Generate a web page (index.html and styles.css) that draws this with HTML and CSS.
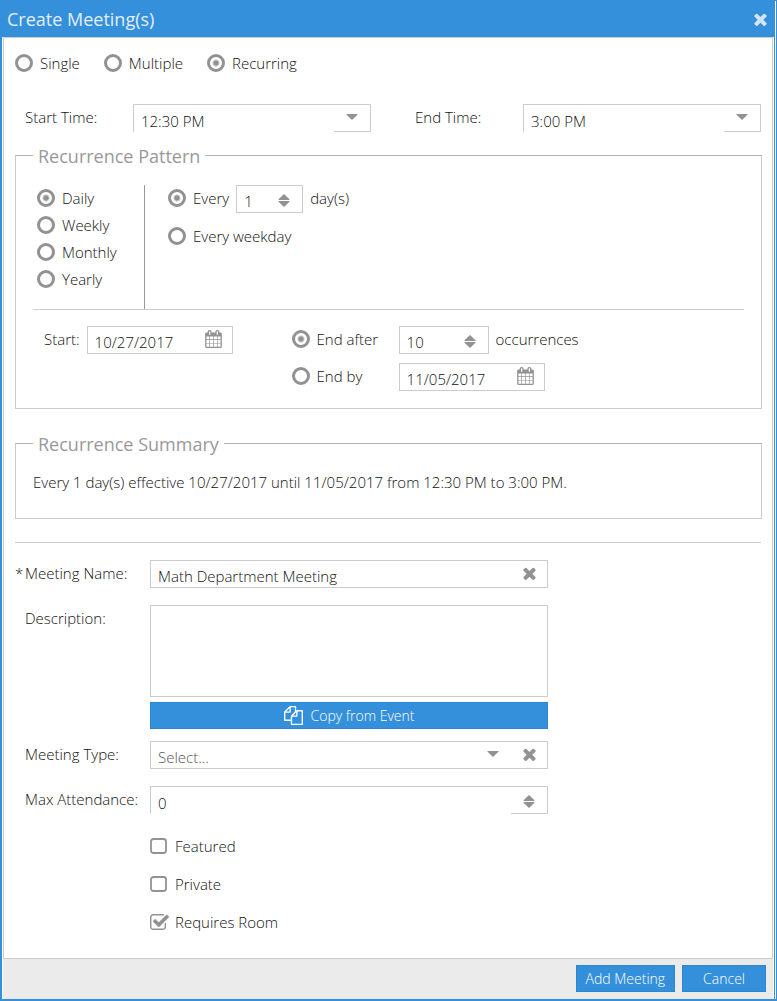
FILE: index.html
```html
<!DOCTYPE html>
<html lang="en">
<head>
  <meta charset="UTF-8">
  <meta name="viewport" content="width=device-width, initial-scale=1.0">
  <title>Create Meeting(s)</title>
  <link rel="stylesheet" href="styles.css">
</head>
<body>

  <svg class="sprite" aria-hidden="true">
    <symbol id="icon-times" viewBox="302 302 1188 1252">
      <path d="M1490 1322q0 40-28 68l-136 136q-28 28-68 28t-68-28l-294-294-294 294q-28 28-68 28t-68-28l-136-136q-28-28-28-68t28-68l294-294-294-294q-28-28-28-68t28-68l136-136q28-28 68-28t68 28l294 294 294-294q28-28 68-28t68 28l136 136q28 28 28 68t-28 68l-294 294 294 294q28 28 28 68z"/>
    </symbol>
    <symbol id="icon-calendar" viewBox="64 0 1664 1792">
      <path d="M192 1664h288v-288h-288v288zm352 0h320v-288h-320v288zm-352-352h288v-320h-288v320zm352 0h320v-320h-320v320zm-352-384h288v-288h-288v288zm736 736h320v-288h-320v288zm-384-736h320v-288h-320v288zm768 736h288v-288h-288v288zm-384-352h320v-320h-320v320zm-352-864v-288q0-13-9.5-22.5t-22.5-9.5h-64q-13 0-22.5 9.5t-9.5 22.5v288q0 13 9.5 22.5t22.5 9.5h64q13 0 22.5-9.5t9.5-22.5zm736 864h288v-320h-288v320zm-384-384h320v-288h-320v288zm384 0h288v-288h-288v288zm32-480v-288q0-13-9.5-22.5t-22.5-9.5h-64q-13 0-22.5 9.5t-9.5 22.5v288q0 13 9.5 22.5t22.5 9.5h64q13 0 22.5-9.5t9.5-22.5zm384-64v1280q0 52-38 90t-90 38h-1408q-52 0-90-38t-38-90v-1280q0-52 38-90t90-38h128v-96q0-66 47-113t113-47h64q66 0 113 47t47 113v96h384v-96q0-66 47-113t113-47h64q66 0 113 47t47 113v96h128q52 0 90 38t38 90z"/>
    </symbol>
    <symbol id="icon-copy" viewBox="0 0 1792 1792">
      <path d="M1696 384q40 0 68 28t28 68v1216q0 40-28 68t-68 28h-960q-40 0-68-28t-28-68v-288h-544q-40 0-68-28t-28-68v-672q0-40 20-88t48-76l408-408q28-28 76-48t88-20h416q40 0 68 28t28 68v328q68-40 128-40h416zm-544 213l-299 299h299v-299zm-640-384l-299 299h299v-299zm196 647l316-316v-416h-384v416q0 40-28 68t-68 28h-416v640h512v-256q0-40 20-88t48-76zm956 804v-1152h-384v416q0 40-28 68t-68 28h-416v640h896z"/>
    </symbol>
    <symbol id="icon-up" viewBox="0 0 12 6">
      <path d="M6 0l5.500 5.200q.4.800-.5.800H1q-.9 0-.5-.8z"/>
    </symbol>
    <symbol id="icon-down" viewBox="0 0 12 6">
      <path d="M6 6L.5.800Q.1 0 1 0h10q.9 0 .5.800z"/>
    </symbol>
  </svg>

  <form class="dialog">
    <div class="dialog-inner">
      <header class="dialog-header">
        <h1 class="dialog-title">Create Meeting(s)</h1>
        <button type="button" class="icon-button close" aria-label="Close"><svg class="icon-x"><use href="#icon-times"/></svg></button>
      </header>

      <main class="dialog-body">
        <div class="mode-row">
          <label class="choice"><input type="radio" name="mode">Single</label>
          <label class="choice"><input type="radio" name="mode">Multiple</label>
          <label class="choice"><input type="radio" name="mode" checked>Recurring</label>
        </div>

        <div class="time-row">
          <div class="time-field">
            <label for="start-time">Start Time:</label>
            <select id="start-time" class="time-select">
              <option>12:30 PM</option>
            </select>
          </div>
          <div class="time-field">
            <label for="end-time">End Time:</label>
            <select id="end-time" class="time-select">
              <option>3:00 PM</option>
            </select>
          </div>
        </div>

        <fieldset class="group">
          <legend>Recurrence Pattern</legend>
          <div class="pattern">
            <div class="frequency">
              <label class="choice"><input type="radio" name="frequency" checked>Daily</label>
              <label class="choice"><input type="radio" name="frequency">Weekly</label>
              <label class="choice"><input type="radio" name="frequency">Monthly</label>
              <label class="choice"><input type="radio" name="frequency">Yearly</label>
            </div>
            <div class="interval">
              <div class="interval-row">
                <label class="choice"><input type="radio" name="interval" checked>Every</label>
                <div class="field field-days">
                  <input type="number" id="days" value="1">
                  <div class="stepper">
                    <button type="button" aria-label="More days"><svg><use href="#icon-up"/></svg></button>
                    <button type="button" aria-label="Fewer days"><svg><use href="#icon-down"/></svg></button>
                  </div>
                </div>
                <label for="days">day(s)</label>
              </div>
              <div class="interval-row">
                <label class="choice"><input type="radio" name="interval">Every weekday</label>
              </div>
            </div>
          </div>

          <div class="range">
            <div class="range-start">
              <label for="start-date">Start:</label>
              <div class="field field-date">
                <input type="text" id="start-date" value="10/27/2017">
                <button type="button" class="icon-button calendar" aria-label="Pick start date"><svg><use href="#icon-calendar"/></svg></button>
              </div>
            </div>
            <div class="range-end">
              <label class="choice"><input type="radio" name="end" checked>End after</label>
              <div class="range-value">
                <div class="field field-count">
                  <input type="number" id="occurrences" value="10">
                  <div class="stepper">
                    <button type="button" aria-label="More occurrences"><svg><use href="#icon-up"/></svg></button>
                    <button type="button" aria-label="Fewer occurrences"><svg><use href="#icon-down"/></svg></button>
                  </div>
                </div>
                <label for="occurrences">occurrences</label>
              </div>
              <label class="choice"><input type="radio" name="end">End by</label>
              <div class="field field-date">
                <input type="text" aria-label="End date" value="11/05/2017">
                <button type="button" class="icon-button calendar" aria-label="Pick end date"><svg><use href="#icon-calendar"/></svg></button>
              </div>
            </div>
          </div>
        </fieldset>

        <fieldset class="group summary">
          <legend>Recurrence Summary</legend>
          <p>Every 1 day(s) effective 10/27/2017 until 11/05/2017 from 12:30 PM to 3:00 PM.</p>
        </fieldset>

        <div class="details">
          <label class="required" for="name">Meeting Name:</label>
          <div class="field">
            <input type="text" id="name" value="Math Department Meeting">
            <button type="button" class="icon-button clear" aria-label="Clear name"><svg class="icon-x"><use href="#icon-times"/></svg></button>
          </div>

          <label for="description">Description:</label>
          <div class="description">
            <textarea id="description"></textarea>
            <button type="button" class="button"><svg class="icon-copy"><use href="#icon-copy"/></svg>Copy from Event</button>
          </div>

          <label for="type">Meeting Type:</label>
          <div class="field">
            <select id="type" class="type-select">
              <option>Select...</option>
            </select>
            <button type="button" class="icon-button clear" aria-label="Clear type"><svg class="icon-x"><use href="#icon-times"/></svg></button>
          </div>

          <label for="attendance">Max Attendance:</label>
          <div class="field field-open">
            <input type="number" id="attendance" value="0">
            <div class="stepper">
              <button type="button" aria-label="Increase"><svg><use href="#icon-up"/></svg></button>
              <button type="button" aria-label="Decrease"><svg><use href="#icon-down"/></svg></button>
            </div>
          </div>

          <div class="options">
            <label class="choice"><input type="checkbox">Featured</label>
            <label class="choice"><input type="checkbox">Private</label>
            <label class="choice"><input type="checkbox" checked>Requires Room</label>
          </div>
        </div>
      </main>

      <footer class="dialog-footer">
        <button type="submit" class="button">Add Meeting</button>
        <button type="button" class="button button-cancel">Cancel</button>
      </footer>
    </div>
  </form>

</body>
</html>
```

FILE: styles.css
```css
:root {
  --blue: #3590dc;
  --line: #ccc;
  --icon: #929292;
  --text: #111;
  --on-blue: #e4eef8;
  --caret: url("data:image/svg+xml,%3Csvg xmlns='http://www.w3.org/2000/svg' viewBox='0 0 12 6'%3E%3Cpath d='M6 6L.5.8Q.1 0 1 0h10q.9 0 .5.8z' fill='%23929292'/%3E%3C/svg%3E");
}

*, *::before, *::after {
  box-sizing: border-box;
}

body {
  margin: 0;
  background: #fff;
  color: var(--text);
  font: 300 15px/20px "Open Sans", sans-serif;
}

button, input, select, textarea {
  margin: 0;
  padding: 0;
  border: 0;
  border-radius: 0;
  background: none;
  color: inherit;
  font: inherit;
  appearance: none;
}

button {
  cursor: pointer;
}

svg {
  display: block;
  fill: currentColor;
}

.sprite {
  display: none;
}

/* dialog frame */
.dialog {
  display: flex;
  min-height: 100vh;
  padding-right: 1px;
  border: solid var(--blue);
  border-width: 1px 1px 2px 2px;
}

.dialog-inner {
  flex: 1;
  display: flex;
  flex-direction: column;
  min-width: 0;
  border-right: 1px solid var(--blue);
}

.dialog-header {
  display: flex;
  align-items: center;
  justify-content: space-between;
  height: 36px;
  padding: 0 7px 0 5px;
  background: var(--blue);
  color: var(--on-blue);
}

.dialog-title {
  margin: 0;
  font-size: 18px;
  font-weight: 400;
}

.dialog-body {
  flex: 1;
  margin: 0 1px;
  padding: 15px 10px 24px 11px;
  border: 1px solid var(--line);
}

.dialog-footer {
  display: flex;
  justify-content: flex-end;
  gap: 7px;
  margin: 0 1px;
  padding: 6px 7px 7px;
  background: #ebebeb;
}

/* buttons and icons */
.button {
  display: flex;
  align-items: center;
  justify-content: center;
  gap: 8px;
  height: 27px;
  padding: 0 9px;
  border: 1px solid #2f86d0;
  background: var(--blue);
  color: #fff;
  font-size: 14px;
}

.button-cancel {
  padding: 0 20px;
}

.icon-button {
  display: flex;
  align-items: center;
  justify-content: center;
  color: var(--icon);
}

.close {
  color: #d3e6f7;
}

.icon-x {
  width: 13px;
  height: 13px;
}

.icon-copy {
  width: 19px;
  height: 19px;
}

/* radios and tick boxes */
.choice {
  display: flex;
  align-items: center;
  gap: 7px;
  white-space: nowrap;
}

.choice input {
  flex: none;
}

.choice input[type="radio"] {
  width: 18px;
  height: 18px;
  border: 3px solid var(--icon);
  border-radius: 50%;
}

.choice input[type="radio"]:checked {
  background: radial-gradient(circle, var(--icon) 2px, transparent 4px);
}

.choice input[type="checkbox"] {
  width: 19px;
  height: 16px;
  background: no-repeat url("data:image/svg+xml,%3Csvg xmlns='http://www.w3.org/2000/svg' width='19' height='16'%3E%3Crect x='1' y='1' width='15' height='14' rx='2.500' fill='none' stroke='%23929292' stroke-width='1.800'/%3E%3C/svg%3E");
}

.choice input[type="checkbox"]:checked {
  background-image: url("data:image/svg+xml,%3Csvg xmlns='http://www.w3.org/2000/svg' width='19' height='16' viewBox='64 128 1664 1408' preserveAspectRatio='none'%3E%3Cpath fill='%23929292' d='M1472 930v318q0 119-84.500 203.500t-203.500 84.500h-832q-119 0-203.500-84.500t-84.500-203.500v-832q0-119 84.500-203.500t203.500-84.500h832q63 0 117 25 15 7 18 23 3 17-9 29l-49 49q-10 10-23 10-3 0-9-2-23-6-45-6h-832q-66 0-113 47t-47 113v832q0 66 47 113t113 47h832q66 0 113-47t47-113v-254q0-13 9-22l64-64q10-10 23-10 6 0 12 3 20 8 20 29zm231-489l-814 814q-24 24-57 24t-57-24l-430-430q-24-24-24-57t24-57l110-110q24-24 57-24t57 24l263 263 647-647q24-24 57-24t57 24l110 110q24 24 24 57t-24 57z'/%3E%3C/svg%3E");
}

/* text fields */
.field {
  display: flex;
  height: 28px;
  border: 1px solid var(--line);
}

.field > input,
.field > select {
  flex: 1;
  width: 0;
  min-width: 0;
  padding: 4px 7px 0;
}

input[type="number"]::-webkit-inner-spin-button {
  display: none;
}

.field-days {
  width: 67px;
}

.field-count {
  width: 90px;
}

.field-date {
  width: 146px;
}

.stepper {
  display: flex;
  flex-direction: column;
  justify-content: center;
  align-items: center;
  gap: 1px;
  width: 36px;
  padding-top: 3px;
  color: var(--icon);
}

.stepper svg {
  width: 12px;
  height: 6px;
}

.calendar {
  width: 37px;
  padding-bottom: 2px;
}

.calendar svg {
  width: 17px;
  height: 18px;
}

.clear {
  width: 36px;
  padding-bottom: 1px;
}

/* the lower edge is only drawn under the trigger */
.field-open {
  border-bottom: 0;
}

.field-open .stepper {
  border-bottom: 1px solid var(--line);
}

.time-select {
  width: 100%;
  height: 28px;
  padding: 5px 36px 0 7px;
  border: 1px solid var(--line);
  border-bottom: 0;
  background:
    linear-gradient(var(--line), var(--line)) right bottom / 36px 1px no-repeat,
    var(--caret) right 12px top 9px / 12px 6px no-repeat;
}

.field > .type-select {
  color: #555;
  background: var(--caret) right 12px top 9px / 12px 6px no-repeat;
}

/* top rows */
.mode-row {
  display: flex;
  gap: 24px;
  height: 20px;
}

.time-row {
  display: flex;
  gap: 44px;
  margin: 31px 1px 0 10px;
}

.time-field {
  flex: 1;
  display: grid;
  grid-template-columns: 108px 1fr;
  align-items: center;
}

.time-field label {
  padding-bottom: 2px;
}

/* recurrence groups */
.group {
  min-width: 0;
  margin: 11px 0 0;
  padding: 18px 17px 17px;
  border: 1px solid var(--line);
  border-top-color: #b5b5b5;
}

.group legend {
  padding: 2px 5px 0;
  color: #999;
  font-size: 18px;
  font-weight: 400;
  line-height: 22px;
}

.group label {
  padding-bottom: 2px;
}

.pattern {
  display: flex;
  border-bottom: 1px solid var(--line);
}

.frequency {
  width: 112px;
  padding: 0 0 16px 4px;
  border-right: 1px solid #999;
}

.frequency .choice {
  height: 27px;
}

.interval {
  display: flex;
  flex-direction: column;
  gap: 10px;
  padding-left: 23px;
}

.interval-row {
  display: flex;
  align-items: center;
  gap: 7px;
  height: 28px;
}

.range {
  display: flex;
  align-items: flex-start;
  gap: 59px;
  padding: 16px 0 0 11px;
}

.range-start {
  display: flex;
  align-items: center;
  gap: 7px;
}

.range-end {
  display: grid;
  grid-template-columns: 107px auto;
  row-gap: 9px;
}

.range-value {
  display: flex;
  align-items: center;
  gap: 7px;
}

.summary {
  margin-top: 22px;
  padding-top: 17px;
  padding-bottom: 26px;
}

.summary p {
  margin: 0;
}

/* meeting details */
.details {
  display: grid;
  grid-template-columns: 125px minmax(0, 398px);
  row-gap: 17px;
  margin: 23px 1px 0 0;
  padding: 17px 0 0 10px;
  border-top: 1px solid var(--line);
}

.details > label {
  padding-top: 3px;
}

.required::before {
  content: "*";
  float: left;
  margin-left: -10px;
}

.description {
  display: flex;
  flex-direction: column;
  gap: 5px;
  margin-bottom: -5px;
}

.description textarea {
  height: 92px;
  padding: 6px 7px;
  border: 1px solid var(--line);
  resize: none;
}

.options {
  grid-column: 2;
  display: flex;
  flex-direction: column;
  gap: 18px;
  padding-top: 5px;
}

.options .choice {
  gap: 6px;
}
```
